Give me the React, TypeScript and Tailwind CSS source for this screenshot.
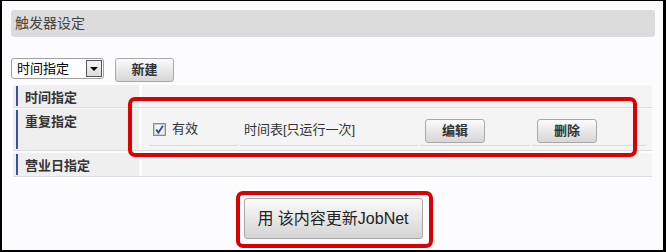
const font = "font-['Liberation_Sans','Noto_Sans_CJK_SC',sans-serif]";

function GrayButton({ label, className }: { label: string; className?: string }) {
  return (
    <button
      className={`flex items-center justify-center rounded-[3px] border border-[#a8a8a8] bg-gradient-to-b from-[#fbfbfb] to-[#d6d6d6] text-[13px] font-bold text-[#333] ${className ?? ''}`}
    >
      {label}
    </button>
  );
}

function RowLabel({ label, height }: { label: string; height: string }) {
  return (
    <div className={`flex ${height} w-[126px] items-start bg-[#efefef] py-px pl-[3px]`}>
      <div className="h-full w-[2px] bg-[#3a53a0]" />
      <span className="ml-[7px] mt-[2px] text-[13px] font-bold text-[#333]">{label}</span>
    </div>
  );
}

function Checkbox() {
  return (
    <svg width="13" height="13" viewBox="0 0 13 13">
      <rect x="0.5" y="0.5" width="12" height="12" fill="#e8e8ee" stroke="#8a8a8a" />
      <rect x="1.5" y="1.5" width="10" height="10" fill="#f4f4f8" stroke="#c8c8d0" />
      <path d="M3.2 6.6 L5.4 9.6 L10 2.8" fill="none" stroke="#2b4a9a" strokeWidth="1.8" />
    </svg>
  );
}

export default function App() {
  return (
    <div
      className={`relative h-[252px] w-[666px] border-b-2 border-l-2 border-r-[3px] border-t border-black bg-[#fcfcff] pl-[9px] pt-[9px] ${font}`}
    >
      <div className="flex h-[27px] w-[644px] items-center rounded-[3px] bg-[#dcdcdc] pl-[4px] text-[14px] text-[#444]">
        触发器设定
      </div>

      <div className="mt-[21px] flex items-start gap-[11px]">
        <div className="flex h-[21px] w-[93px] items-center justify-between rounded-[3px] border border-[#a0a0a0] bg-white pl-[5px] pr-px">
          <span className="text-[13px] text-black">时间指定</span>
          <div className="flex h-[17px] w-[16px] items-center justify-center border border-[#555] bg-gradient-to-b from-[#f4f4f4] to-[#dcdcdc]">
            <div className="h-0 w-0 border-x-[4px] border-t-[4px] border-x-transparent border-t-black" />
          </div>
        </div>
        <GrayButton label="新建" className="h-[24px] w-[59px]" />
      </div>

      <div className="ml-[2px] mt-[3px] w-[639px]">
        <div className="mb-px flex gap-[3px] border-b border-[#dcdcdc]">
          <RowLabel label="时间指定" height="h-[22px]" />
          <div className="flex-1 bg-[#f4f4f4]" />
        </div>
        <div className="mb-[2px] flex gap-[3px] border-b border-[#dcdcdc]">
          <RowLabel label="重复指定" height="h-[41px]" />
          <div className="flex-1 bg-[#f4f4f4] pl-[7px] pr-[6px] pt-[2px]">
            <div className="flex h-[35px] gap-[2px]">
              <div className="flex w-[89px] items-center gap-[6px] border-b border-[#dcdcdc] pl-[4px] pt-[2px]">
                <Checkbox />
                <span className="text-[13px] text-[#333]">有效</span>
              </div>
              <div className="flex w-[178px] items-center border-b border-[#dcdcdc] pl-[4px] pt-[4px] text-[13px] text-[#333]">
                时间表[只运行一次]
              </div>
              <div className="flex w-[110px] items-center border-b border-[#dcdcdc] pl-[5px] pt-[6px]">
                <GrayButton label="编辑" className="h-[24px] w-[60px]" />
              </div>
              <div className="flex flex-1 items-center border-b border-[#dcdcdc] pl-[5px] pt-[6px]">
                <GrayButton label="删除" className="h-[24px] w-[60px]" />
              </div>
            </div>
          </div>
        </div>
        <div className="flex gap-[3px] border-b border-[#dcdcdc]">
          <RowLabel label="营业日指定" height="h-[23px]" />
          <div className="flex-1 bg-[#f4f4f4]" />
        </div>
      </div>

      <div className="mt-[21px] flex w-[644px] justify-center">
        <button className="h-[41px] w-[179px] rounded-[3px] border border-[#a8a8a8] bg-gradient-to-b from-[#fbfbfb] to-[#d4d4d4] text-[16px] text-[#222]">
          用 该内容更新JobNet
        </button>
      </div>

      <div className="pointer-events-none absolute left-[126px] top-[96px] h-[60px] w-[509px] rounded-[7px] border-4 border-[#dc0000]" />
      <div className="pointer-events-none absolute left-[234px] top-[190px] h-[57px] w-[197px] rounded-[7px] border-4 border-[#dc0000]" />
    </div>
  );
}
